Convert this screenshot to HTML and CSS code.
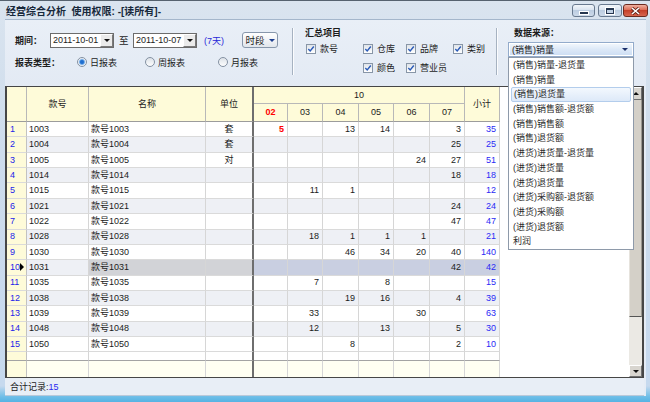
FILE: index.html
```html
<!DOCTYPE html>
<html>
<head>
<meta charset="utf-8">
<title>经营综合分析</title>
<link rel="stylesheet" href="styles.css">
</head>
<body>
<div class="window">
  <div class="titlebar">
    <span class="title">经营综合分析&nbsp; 使用权限: -[读所有]-</span>
    <div class="wbtns">
      <span class="wbtn min"><i></i></span>
      <span class="wbtn max"><i></i></span>
      <span class="wbtn close"><svg width="11" height="8" viewBox="0 0 11 8"><path d="M2 1 L9 7 M9 1 L2 7" stroke="#5a1e14" stroke-width="3"/><path d="M2 1 L9 7 M9 1 L2 7" stroke="#fff" stroke-width="1.6"/></svg></span>
    </div>
  </div>
  <div class="client">
    <div class="filters">
      <div class="sec sec1">
        <div class="frow r1">
          <span class="lbl w35">期间：</span>
          <span class="date"><span class="dtxt">2011-10-01</span><span class="ddbtn"><i class="tri"></i></span></span>
          <span class="to">至</span>
          <span class="date"><span class="dtxt">2011-10-07</span><span class="ddbtn"><i class="tri"></i></span></span>
          <span class="days">(7天)</span>
          <span class="btn">时段<i class="tri blue"></i></span>
        </div>
        <div class="frow r2">
          <span class="lbl w62">报表类型：</span>
          <span class="radio g1"><span class="rb on"></span>日报表</span>
          <span class="radio g2"><span class="rb"></span>周报表</span>
          <span class="radio"><span class="rb"></span>月报表</span>
        </div>
      </div>
      <div class="sep"></div>
      <div class="sec sec2">
        <div class="stitle">汇总项目</div>
        <div class="cbgrid">
          <span class="cb"><span class="box"><svg width="8" height="8" viewBox="0 0 8 8"><path d="M1.3 4 L3.2 6 L6.8 1.5" fill="none" stroke="#2a5bb8" stroke-width="1.4"/></svg></span>款号</span>
          <span class="cb"><span class="box"><svg width="8" height="8" viewBox="0 0 8 8"><path d="M1.3 4 L3.2 6 L6.8 1.5" fill="none" stroke="#2a5bb8" stroke-width="1.4"/></svg></span>仓库</span>
          <span class="cb"><span class="box"><svg width="8" height="8" viewBox="0 0 8 8"><path d="M1.3 4 L3.2 6 L6.8 1.5" fill="none" stroke="#2a5bb8" stroke-width="1.4"/></svg></span>品牌</span>
          <span class="cb"><span class="box"><svg width="8" height="8" viewBox="0 0 8 8"><path d="M1.3 4 L3.2 6 L6.8 1.5" fill="none" stroke="#2a5bb8" stroke-width="1.4"/></svg></span>类别</span>
          <span class="cb r2a"><span class="box"><svg width="8" height="8" viewBox="0 0 8 8"><path d="M1.3 4 L3.2 6 L6.8 1.5" fill="none" stroke="#2a5bb8" stroke-width="1.4"/></svg></span>颜色</span>
          <span class="cb r2b"><span class="box"><svg width="8" height="8" viewBox="0 0 8 8"><path d="M1.3 4 L3.2 6 L6.8 1.5" fill="none" stroke="#2a5bb8" stroke-width="1.4"/></svg></span>营业员</span>
        </div>
      </div>
      <div class="sep"></div>
      <div class="sec sec3">
        <div class="stitle st3">数据来源：</div>
        <div class="select"><span>(销售)销量</span><i class="tri navy"></i></div>
      </div>
    </div>

    <div class="gridwrap">
      <div class="gridarea">
        <div class="grid">
          <div class="h span2"></div>
          <div class="h span2">款号</div>
          <div class="h span2">名称</div>
          <div class="h span2 unit">单位</div>
          <div class="h h10">10</div>
          <div class="h span2">小计</div>
          <div class="h d red">02</div>
          <div class="h d">03</div>
          <div class="h d">04</div>
          <div class="h d">05</div>
          <div class="h d">06</div>
          <div class="h d">07</div>

          <div class="row"><div class="c rn">1</div><div class="c code">1003</div><div class="c nm">款号1003</div><div class="c unit ct">套</div><div class="c n"><b class="red">5</b></div><div class="c n"></div><div class="c n">13</div><div class="c n">14</div><div class="c n"></div><div class="c n">3</div><div class="c n tot">35</div></div>
          <div class="row even"><div class="c rn">2</div><div class="c code">1004</div><div class="c nm">款号1004</div><div class="c unit ct">套</div><div class="c n"></div><div class="c n"></div><div class="c n"></div><div class="c n"></div><div class="c n"></div><div class="c n">25</div><div class="c n tot">25</div></div>
          <div class="row"><div class="c rn">3</div><div class="c code">1005</div><div class="c nm">款号1005</div><div class="c unit ct">对</div><div class="c n"></div><div class="c n"></div><div class="c n"></div><div class="c n"></div><div class="c n">24</div><div class="c n">27</div><div class="c n tot">51</div></div>
          <div class="row even"><div class="c rn">4</div><div class="c code">1014</div><div class="c nm">款号1014</div><div class="c unit ct"></div><div class="c n"></div><div class="c n"></div><div class="c n"></div><div class="c n"></div><div class="c n"></div><div class="c n">18</div><div class="c n tot">18</div></div>
          <div class="row"><div class="c rn">5</div><div class="c code">1015</div><div class="c nm">款号1015</div><div class="c unit ct"></div><div class="c n"></div><div class="c n">11</div><div class="c n">1</div><div class="c n"></div><div class="c n"></div><div class="c n"></div><div class="c n tot">12</div></div>
          <div class="row even"><div class="c rn">6</div><div class="c code">1021</div><div class="c nm">款号1021</div><div class="c unit ct"></div><div class="c n"></div><div class="c n"></div><div class="c n"></div><div class="c n"></div><div class="c n"></div><div class="c n">24</div><div class="c n tot">24</div></div>
          <div class="row"><div class="c rn">7</div><div class="c code">1022</div><div class="c nm">款号1022</div><div class="c unit ct"></div><div class="c n"></div><div class="c n"></div><div class="c n"></div><div class="c n"></div><div class="c n"></div><div class="c n">47</div><div class="c n tot">47</div></div>
          <div class="row even"><div class="c rn">8</div><div class="c code">1028</div><div class="c nm">款号1028</div><div class="c unit ct"></div><div class="c n"></div><div class="c n">18</div><div class="c n">1</div><div class="c n">1</div><div class="c n">1</div><div class="c n"></div><div class="c n tot">21</div></div>
          <div class="row"><div class="c rn">9</div><div class="c code">1030</div><div class="c nm">款号1030</div><div class="c unit ct"></div><div class="c n"></div><div class="c n"></div><div class="c n">46</div><div class="c n">34</div><div class="c n">20</div><div class="c n">40</div><div class="c n tot">140</div></div>
          <div class="row even sel"><div class="c rn">10<i class="ptr"></i></div><div class="c code">1031</div><div class="c nm">款号1031</div><div class="c unit ct"></div><div class="c n"></div><div class="c n"></div><div class="c n"></div><div class="c n"></div><div class="c n"></div><div class="c n">42</div><div class="c n tot">42</div></div>
          <div class="row"><div class="c rn">11</div><div class="c code">1035</div><div class="c nm">款号1035</div><div class="c unit ct"></div><div class="c n"></div><div class="c n">7</div><div class="c n"></div><div class="c n">8</div><div class="c n"></div><div class="c n"></div><div class="c n tot">15</div></div>
          <div class="row even"><div class="c rn">12</div><div class="c code">1038</div><div class="c nm">款号1038</div><div class="c unit ct"></div><div class="c n"></div><div class="c n"></div><div class="c n">19</div><div class="c n">16</div><div class="c n"></div><div class="c n">4</div><div class="c n tot">39</div></div>
          <div class="row"><div class="c rn">13</div><div class="c code">1039</div><div class="c nm">款号1039</div><div class="c unit ct"></div><div class="c n"></div><div class="c n">33</div><div class="c n"></div><div class="c n"></div><div class="c n">30</div><div class="c n"></div><div class="c n tot">63</div></div>
          <div class="row even"><div class="c rn">14</div><div class="c code">1048</div><div class="c nm">款号1048</div><div class="c unit ct"></div><div class="c n"></div><div class="c n">12</div><div class="c n"></div><div class="c n">13</div><div class="c n"></div><div class="c n">5</div><div class="c n tot">30</div></div>
          <div class="row"><div class="c rn">15</div><div class="c code">1050</div><div class="c nm">款号1050</div><div class="c unit ct"></div><div class="c n"></div><div class="c n"></div><div class="c n">8</div><div class="c n"></div><div class="c n"></div><div class="c n">2</div><div class="c n tot">10</div></div>
          <div class="row blank"><div class="c rn"></div><div class="c"></div><div class="c"></div><div class="c unit"></div><div class="c"></div><div class="c"></div><div class="c"></div><div class="c"></div><div class="c"></div><div class="c"></div><div class="c"></div></div>
          <div class="row foot"><div class="c rn"></div><div class="c"></div><div class="c"></div><div class="c unit"></div><div class="c"></div><div class="c"></div><div class="c"></div><div class="c"></div><div class="c"></div><div class="c"></div><div class="c"></div></div>
        </div>
      </div>
      <div class="vscroll">
        <div class="sb-btn"><i class="tri up"></i></div>
        <div class="sb-thumb"></div>
        <div class="sb-track"></div>
        <div class="sb-btn down"><i class="tri"></i></div>
      </div>
    </div>

    <div class="status">合计记录:<span class="blue">15</span></div>
  </div>

  <ul class="droplist">
    <li>(销售)销量-退货量</li>
    <li>(销售)销量</li>
    <li class="hl">(销售)退货量</li>
    <li>(销售)销售额-退货额</li>
    <li>(销售)销售额</li>
    <li>(销售)退货额</li>
    <li>(进货)进货量-退货量</li>
    <li>(进货)进货量</li>
    <li>(进货)退货量</li>
    <li>(进货)采购额-退货额</li>
    <li>(进货)采购额</li>
    <li>(进货)退货额</li>
    <li>利润</li>
  </ul>
</div>
</body>
</html>
```

FILE: styles.css
```css
* { box-sizing: border-box; }
body {
  margin: 0;
  font-family: "Liberation Sans", "Noto Sans CJK SC", sans-serif;
  font-size: 9px;
  color: #1c1c1c;
}
.window {
  position: relative;
  width: 650px;
  height: 402px;
  display: flex;
  flex-direction: column;
  border-top: 1px solid #56626f;
  background: linear-gradient(#dae4ef 0, #cddcec 150px, #c6d9ee 385px, #6cbde7 396px, #52b1e3 402px);
  overflow: hidden;
}

/* title bar */
.titlebar {
  height: 18px;
  flex-shrink: 0;
  display: flex;
  justify-content: space-between;
  align-items: center;
  padding-left: 6px;
}
.title {
  font-size: 10px;
  font-weight: bold;
  color: #17283b;
}
.wbtns {
  display: flex;
  align-self: flex-start;
  padding-top: 3px;
  margin-right: 2px;
}
.wbtn {
  height: 13px;
  border: 1px solid #68798f;
  border-radius: 3px;
  display: flex;
  align-items: center;
  justify-content: center;
}
.min, .max {
  background: linear-gradient(#f2f6fa, #d9e3ef 45%, #bccde1 50%, #cddaea);
}
.min { width: 23px; margin-right: 3px; }
.max { width: 24px; margin-right: 1px; }
.min i {
  width: 8px; height: 2px; margin-top: 4px;
  background: #253650;
  box-shadow: 0 0 0 1px #fff;
}
.max i {
  width: 8px; height: 6px;
  border: 1px solid #253650;
  border-top-width: 2px;
  box-shadow: 0 0 0 1px #fff;
}
.close {
  width: 25px;
  border-color: #6b2a1f;
  background: linear-gradient(#efb1a1, #dc6c55 45%, #c5402a 50%, #d7654e);
}
.close svg { display: block; }

/* client */
.client {
  flex: 1;
  margin: 0 4px 6px 5px;
  display: flex;
  flex-direction: column;
  border-top: 1px solid #a4b6cb;
  background: #e5ecf5;
}
.filters {
  height: 66px;
  flex-shrink: 0;
  display: flex;
  background: linear-gradient(#e9eff7, #e3eaf4);
}
.sec1 { width: 287px; padding: 12px 0 0 10px; }
.sec2 { width: 202px; padding: 7px 0 0 11px; }
.sec3 { width: 148px; padding: 7px 0 0 10px; }
.sep {
  width: 2px;
  height: 47px;
  margin-top: 8px;
  border-left: 1px solid #a6b2c1;
  border-right: 1px solid #fbfcfe;
}
.frow { display: flex; align-items: center; }
.r1 { height: 16px; }
.r2 { height: 14px; margin-top: 7px; }
.lbl { font-weight: bold; flex-shrink: 0; }
.w35 { width: 35px; }
.w62 { width: 62px; }
.date {
  width: 64px;
  height: 15px;
  border: 1px solid #6c6c6c;
  background: #fff;
  display: flex;
  align-items: center;
  padding-left: 2px;
  overflow: hidden;
}
.dtxt { flex: 1; overflow: hidden; white-space: nowrap; }
.ddbtn {
  width: 13px;
  height: 13px;
  flex-shrink: 0;
  background: #ebebeb;
  border: 1px solid;
  border-color: #fff #7a7a7a #7a7a7a #fff;
  display: flex;
  align-items: center;
  justify-content: center;
}
.tri {
  width: 0; height: 0;
  border-left: 3px solid transparent;
  border-right: 3px solid transparent;
  border-top: 3px solid #111;
}
.tri.up { border-top: 0; border-bottom: 3px solid #111; }
.tri.blue { border-top-color: #1d3f8f; margin-left: 4px; margin-top: 1px; }
.tri.navy { border-top-color: #1b2f6a; }
.to { margin-left: 5px; width: 14px; font-size: 9.5px; }
.days { margin-left: 7px; width: 38px; color: #2828d8; }
.btn {
  width: 36px;
  height: 16px;
  border: 1px solid #8797ab;
  border-radius: 3px;
  background: linear-gradient(#ffffff, #f1f3f6 50%, #e1e6ec);
  display: flex;
  align-items: center;
  justify-content: center;
  font-size: 9.5px;
}
.radio { display: flex; align-items: center; gap: 3px; }
.g1 { width: 68px; }
.g2 { width: 73px; }
.rb {
  width: 10px; height: 10px;
  border-radius: 50%;
  border: 1px solid #8491a2;
  background: linear-gradient(#dde2e8, #fdfdfe);
}
.rb.on {
  background: radial-gradient(circle, #1c66c9 0, #2a79d6 1.8px, #9cc4ee 2.8px, #e9eff6 3.6px, #f6f8fb 4px);
}
.stitle { font-weight: bold; height: 12px; line-height: 12px; }
.st3 { margin-left: 6px; }
.cbgrid {
  display: grid;
  grid-template-columns: 57px 43px 47px auto;
  grid-template-rows: 19px 19px;
}
.cb { display: flex; align-items: center; gap: 4px; }
.r2a { grid-column: 2; grid-row: 2; }
.r2b { grid-column: 3; grid-row: 2; }
.box {
  width: 10px; height: 10px;
  margin-left: 1px;
  border: 1px solid #8896a7;
  background: linear-gradient(#dfe4ea, #ffffff);
  display: flex;
}
.box svg { display: block; }
.select {
  margin-top: 3px;
  width: 126px;
  height: 15px;
  border: 1px solid #93abcb;
  background: linear-gradient(#f4f8fd, #dce8f7 50%, #cbddf3);
  box-shadow: inset 0 0 0 1px #fff;
  display: flex;
  align-items: center;
  justify-content: space-between;
  padding: 0 5px 0 3px;
}

/* grid */
.gridwrap {
  height: 292px;
  flex-shrink: 0;
  margin-right: 2px;
  display: flex;
  border-style: solid;
  border-color: #464646;
  border-width: 1px 2px 1px 2px;
}
.gridarea { flex: 1; background: #fff; overflow: hidden; }
.grid {
  width: 493px;
  display: grid;
  grid-template-columns: 20px 62px 117px 48px 34px 35px 36px 35px 36px 35px 35px;
  grid-template-rows: 17px 18px repeat(15, 15.37px) 9px 15.45px;
  line-height: 1.2;
}
.h {
  background: #fefbd9;
  border-right: 1px solid #b8b8b8;
  border-bottom: 1px solid #b8b8b8;
  display: flex;
  align-items: center;
  justify-content: center;
}
.span2 { grid-row: span 2; border-bottom-color: #9c9c9c; }
.h10 { grid-column: span 6; }
.h.d { border-bottom-color: #9c9c9c; }
.h.unit, .c.unit { border-right: 2px solid #6e6e6e; }
.red { color: #f00; font-weight: bold; }
.row { display: contents; }
.c {
  display: flex;
  align-items: center;
  padding: 0 2px;
  white-space: nowrap;
  overflow: hidden;
  background: #fff;
  border-right: 1px solid #d6d6d6;
  border-bottom: 1px solid #dadada;
}
.row.even .c { background: #eef0f5; }
.c.n { justify-content: flex-end; padding-right: 3px; }
.c.ct { justify-content: center; }
.c.tot { color: #2a2af5; }
.row .c.rn {
  background: #fefbd9;
  color: #2323ea;
  padding-left: 3px;
  border-right-color: #c2c2c2;
}
.row.sel .c { background: #c9cfe1; }
.row.sel .c.nm, .row.sel .c.unit { background: #d2d3d7; }
.row.sel .c.code { background: #eef0f5; }
.row.sel .c.rn { background: #fefbd9; }
.ptr {
  margin-left: auto;
  margin-right: 0;
  width: 0; height: 0;
  border-top: 4px solid transparent;
  border-bottom: 4px solid transparent;
  border-left: 4px solid #000;
}
.row.blank .c { border-bottom-color: #a3a3a3; }
.row.foot .c { background: #fffff2; border-bottom: 0; }
.row.foot .c.rn { background: #fefcdf; }

/* scrollbar */
.vscroll {
  width: 13px;
  display: flex;
  flex-direction: column;
  background: #ebe9e4;
}
.sb-btn {
  height: 13px;
  flex-shrink: 0;
  background: #d8d5cf;
  border: 1px solid;
  border-color: #fff #6f6f6f #6f6f6f #fff;
  display: flex;
  align-items: center;
  justify-content: center;
}
.sb-btn.down { height: 12px; }
.sb-thumb {
  height: 217px;
  flex-shrink: 0;
  background: #d4d0c8;
  border-left: 1px solid #e6e3dd;
  border-right: 1px solid #9a978f;
  border-bottom: 1px solid #555;
}
.sb-track { flex: 1; background: #ebe9e4; }

/* status */
.status {
  flex: 1;
  display: flex;
  align-items: center;
  padding-left: 5px;
  background: #e8eef6;
  margin-right: 2px;
  border-bottom: 1px solid #b9c9da;
}
.blue { color: #2828f0; }

/* dropdown list */
.droplist {
  position: absolute;
  left: 508px;
  top: 56px;
  width: 126px;
  height: 193px;
  margin: 0;
  padding: 0;
  list-style: none;
  background: #fff;
  border: 1px solid #8e9aaa;
  color: #2a2a2a;
}
.droplist li {
  height: 14.7px;
  line-height: 14.7px;
  padding-left: 4px;
  white-space: nowrap;
}
.droplist li.hl {
  margin: 0 2px;
  padding-left: 2px;
  border: 1px solid #b3cdec;
  border-radius: 2px;
  line-height: 12.7px;
  background: linear-gradient(#f3f8fe, #dde9f8);
}
```
